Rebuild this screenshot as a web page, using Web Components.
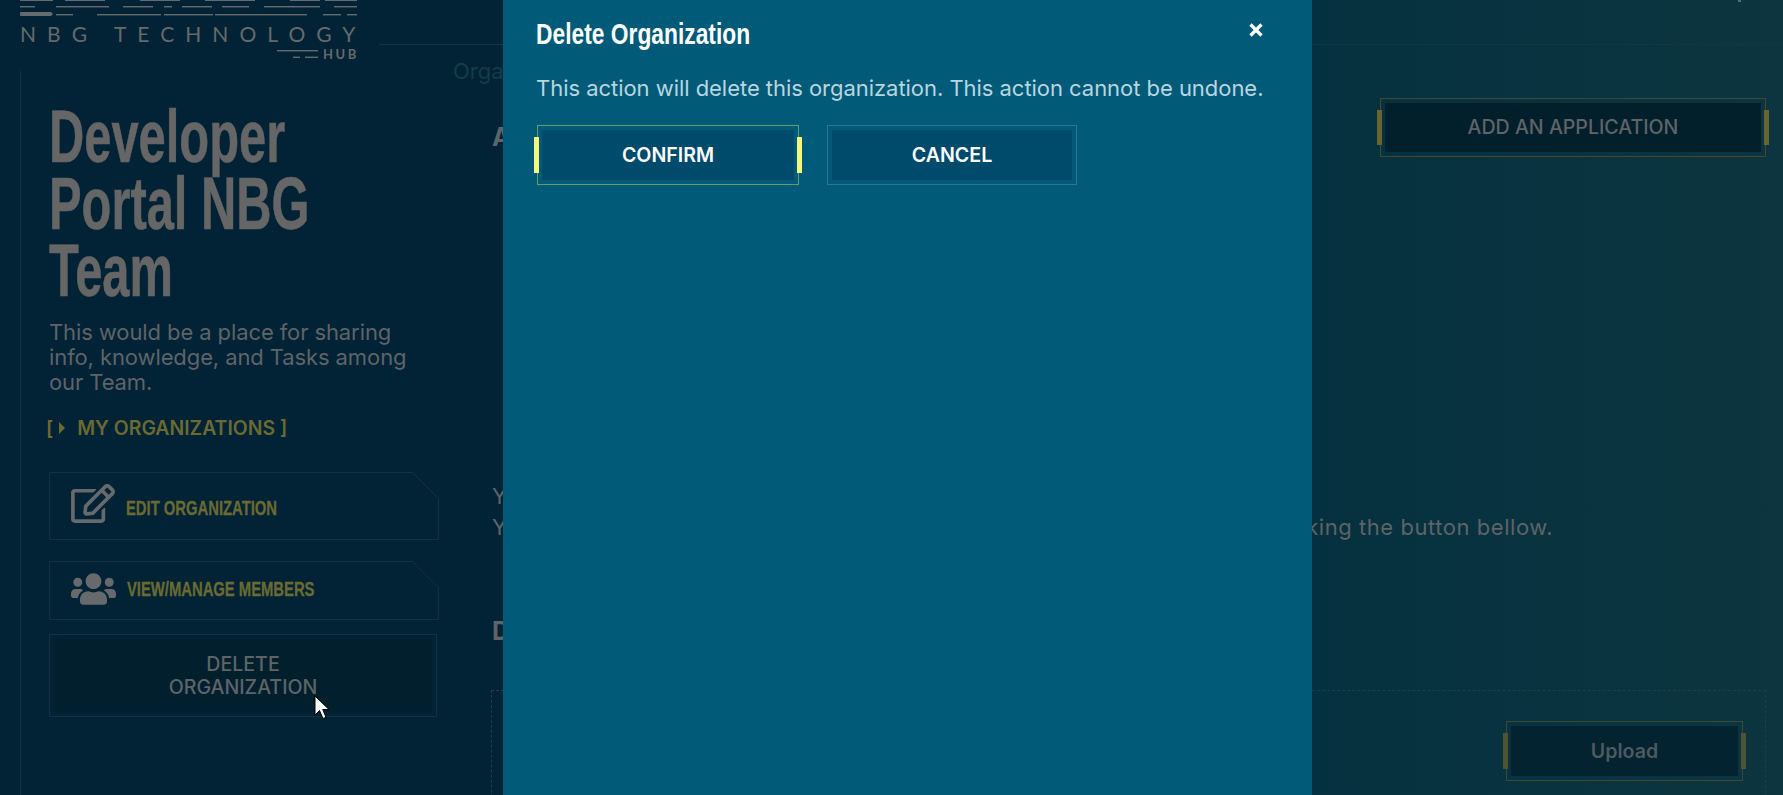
<!DOCTYPE html>
<html>
<head>
<meta charset="utf-8">
<title>Developer Portal</title>
<style>
    html, body { margin: 0; height: 100%; overflow: hidden; background: #012335; }
    body { font-family: "Inter", "Liberation Sans", sans-serif; }
</style>
</head>
<body>
<app-shell>
    <hub-logo slot="logo"></hub-logo>
    <side-panel slot="side" heading="Developer|Portal NBG|Team">
        This would be a place for sharing info, knowledge, and Tasks among our Team.
    </side-panel>
    <main-content slot="main"></main-content>
</app-shell>
<confirm-modal heading="Delete Organization">This action will delete this organization. This action cannot be undone.</confirm-modal>
<mouse-pointer></mouse-pointer>

<script>
// no condensed family is installed, so headings are squeezed sideways
const HEAD_FONT = '"Liberation Sans", sans-serif'
const SQUEEZE = 'display: block; width: max-content; white-space: nowrap; transform-origin: 0 50%;'

class AppShell extends HTMLElement {
    constructor() {
        super()
        this.attachShadow({ mode: 'open' })
        this.shadowRoot.innerHTML = `
            <style>
                :host {
                    display: grid;
                    grid-template-columns: 379px 1fr;
                    height: 795px;
                    overflow: hidden;
                    background: linear-gradient(90deg, #012335 0, #012335 28%, #05303f 72%, #0c353f 100%);
                }
                .topbar {
                    height: 45px;
                    box-sizing: border-box;
                    border-bottom: 1px solid #123743;
                    position: relative;
                }
                .caret {
                    position: absolute;
                    top: 0;
                    right: 42px;
                    width: 3px;
                    height: 2px;
                    background: #5f6a6e;
                }
            </style>
            <div><slot name="logo"></slot><slot name="side"></slot></div>
            <div>
                <div class="topbar"><span class="caret"></span></div>
                <slot name="main"></slot>
            </div>
        `
    }
}

class HubLogo extends HTMLElement {
    constructor() {
        super()
        this.attachShadow({ mode: 'open' })
        this.shadowRoot.innerHTML = `
            <style>
                :host {
                    display: block;
                    height: 71px;
                    padding-left: 20px;
                    color: #666a6c;
                    font-family: "Lato", "Liberation Sans", sans-serif;
                    overflow: hidden;
                }
                svg { display: block; }
                .name {
                    width: 340px;
                    font-size: 21px;
                    line-height: 20px;
                    letter-spacing: 11.05px;
                    white-space: nowrap;
                }
                .sub {
                    display: flex;
                    justify-content: flex-end;
                    align-items: center;
                    gap: 5px;
                    width: 337px;
                    margin-top: 4px;
                    font-size: 13px;
                    line-height: 13px;
                    font-weight: 700;
                    letter-spacing: 2.6px;
                }
                .sub span { margin-right: -2px; }
            </style>
            <svg width="338" height="24" viewBox="0 0 338 24" fill="#666a6c">
                <rect x="0" y="0" width="33" height="1"/><rect x="45" y="0" width="40" height="1"/><rect x="120" y="0" width="40" height="1"/><rect x="185" y="0" width="50" height="1"/><rect x="270" y="0" width="30" height="1"/><rect x="305" y="0" width="32" height="1"/>
                <rect x="0" y="6" width="15" height="1.4"/><rect x="36" y="6" width="53" height="1.4"/><rect x="103" y="6" width="30" height="1.4"/><rect x="144" y="6" width="8" height="1.4"/><rect x="162" y="6" width="30" height="1.4"/><rect x="202" y="6" width="27" height="1.4"/><rect x="244" y="6" width="56" height="1.4"/><rect x="314" y="6" width="23" height="1.4"/>
                <path d="M0 13.5a1 1 0 0 1 1-1.5h30l2 2-2 2H1a1 1 0 0 1-1-1.5z"/>
                <rect x="36" y="14" width="17" height="1.4"/><rect x="77" y="14" width="64" height="1.4"/><rect x="144" y="14" width="49" height="1.4"/><rect x="195" y="14" width="92" height="1.4"/><rect x="303" y="14" width="18" height="1.4"/><rect x="327" y="14" width="10" height="1.4"/>
            </svg>
            <div class="name">NBG TECHNOLOGY</div>
            <div class="sub">
                <svg width="41" height="9" viewBox="0 0 41 9" fill="#666a6c"><rect x="0" y="0" width="41" height="1.4"/><rect x="16" y="6.6" width="7" height="1.4"/><rect x="28" y="6.6" width="13" height="1.4"/></svg>
                <span>HUB</span>
            </div>
        `
    }
}

class SidePanel extends HTMLElement {
    constructor() {
        super()
        this.attachShadow({ mode: 'open' })
        this.shadowRoot.innerHTML = `
            <style>
                :host {
                    display: block;
                    margin-left: 20px;
                    height: 724px;
                    box-sizing: border-box;
                    border-left: 1px solid #14313f;
                    padding: 32px 0 0 28px;
                }
                h1 {
                    margin: 0;
                    font-family: ${HEAD_FONT};
                    font-weight: 700;
                    font-size: 74px;
                    line-height: 67px;
                    color: #666;
                    -webkit-text-stroke: .6px #666;
                }
                h1 span { ${SQUEEZE} transform: scaleX(.66); }
                p {
                    margin: 16px 0 0;
                    width: 365px;
                    font-size: 22px;
                    letter-spacing: -.1px;
                    line-height: 25px;
                    color: #5e6468;
                }
                .orgs {
                    margin: 21px 0 0 -3px;
                    font-size: 19.4px;
                    font-weight: 600;
                    line-height: 24px;
                    color: #6b6a32;
                    display: flex;
                    align-items: center;
                    gap: 5px;
                    white-space: nowrap;
                }
                .tri {
                    width: 0;
                    height: 0;
                    border-left: 6px solid #6b6a32;
                    border-top: 6px solid transparent;
                    border-bottom: 6px solid transparent;
                    margin: 0 7px 0 1px;
                }
                .links { margin-top: 32px; display: flex; flex-direction: column; }
                svg { fill: #666a6c; }
            </style>
            <h1></h1>
            <p><slot></slot></p>
            <div class="orgs">[<span class="tri"></span>MY ORGANIZATIONS ]</div>
            <div class="links">
                <side-link h="68" label="EDIT ORGANIZATION" style="--icon-nudge:-6px;--label-nudge:4px">
                    <svg width="44" height="39" viewBox="0 0 576 512"><path d="M402.3 344.9l32-32c5-5 13.7-1.5 13.7 5.7V464c0 26.5-21.5 48-48 48H48c-26.5 0-48-21.5-48-48V112c0-26.5 21.5-48 48-48h273.5c7.1 0 10.7 8.6 5.7 13.7l-32 32c-1.5 1.5-3.5 2.3-5.7 2.3H48v352h352V350.5c0-2.1.8-4.1 2.3-5.6zm156.6-201.8L296.3 405.7l-90.4 10c-26.2 2.9-48.5-19.2-45.6-45.6l10-90.4L432.9 17.1c22.9-22.9 59.9-22.9 82.7 0l43.2 43.2c22.9 22.9 22.9 60 .1 82.8zM460.1 174L402 115.9 216.2 301.8l-7.3 65.3 65.3-7.3L460.1 174zm64.8-79.7l-43.2-43.2c-4.1-4.1-10.8-4.1-14.8 0L436 82l58.1 58.1 30.9-30.9c4-4.2 4-10.8-.1-14.9z"/></svg>
                </side-link>
                <side-link h="59" label="VIEW/MANAGE MEMBERS" style="margin-top:21px;--icon-nudge:-4px;--label-nudge:-2px">
                    <svg width="45" height="36" viewBox="0 0 640 512"><path d="M96 224c35.3 0 64-28.7 64-64s-28.7-64-64-64-64 28.7-64 64 28.7 64 64 64zm448 0c35.3 0 64-28.7 64-64s-28.7-64-64-64-64 28.7-64 64 28.7 64 64 64zm32 32h-64c-17.6 0-33.5 7.1-45.1 18.6 40.3 22.1 68.9 62 75.1 109.4h66c17.7 0 32-14.3 32-32v-32c0-35.3-28.7-64-64-64zm-256 0c61.9 0 112-50.1 112-112S381.9 32 320 32 208 82.1 208 144s50.1 112 112 112zm76.8 32h-8.3c-20.8 10-43.9 16-68.5 16s-47.6-6-68.5-16h-8.3C179.6 288 128 339.6 128 403.2V432c0 26.5 21.5 48 48 48h288c26.5 0 48-21.5 48-48v-28.8c0-63.6-51.6-115.2-115.2-115.2zm-223.7-13.4C161.5 263.1 145.6 256 128 256H64c-35.3 0-64 28.7-64 64v32c0 17.7 14.3 32 32 32h65.9c6.3-47.4 34.9-87.3 75.2-109.4z"/></svg>
                </side-link>
                <hub-button w="388" h="83" look="plain" style="margin-top:14px">DELETE<br>ORGANIZATION</hub-button>
            </div>
        `
        const h1 = this.shadowRoot.querySelector('h1')
        this.getAttribute('heading').split('|').forEach(line => {
            const span = document.createElement('span')
            span.textContent = line
            h1.appendChild(span)
        })
    }
}

class SideLink extends HTMLElement {
    constructor() {
        super()
        this.attachShadow({ mode: 'open' })
        this.shadowRoot.innerHTML = `
            <style>
                :host {
                    display: block;
                    width: 390px;
                }
                svg.frame { position: absolute; left: 0; top: 0; }
                .link {
                    position: relative;
                    display: flex;
                    align-items: center;
                    gap: 11px;
                    padding-left: 22px;
                    box-sizing: border-box;
                    font-family: ${HEAD_FONT};
                    font-weight: 700;
                    font-size: 20px;
                    color: #6b6a32;
                    white-space: nowrap;
                }
                ::slotted(svg) { display: block; position: relative; margin-top: var(--icon-nudge, 0); }
                .label { ${SQUEEZE} position: relative; transform: scaleX(.74); margin-top: var(--label-nudge, 0); -webkit-text-stroke: .3px #6b6a32; }
            </style>
            <div class="link">
                <svg class="frame"><path fill="none" stroke="#14313f"/></svg>
                <slot></slot>
                <span class="label"></span>
            </div>
        `
        const h = Number(this.getAttribute('h'))
        const link = this.shadowRoot.querySelector('.link')
        link.style.height = h + 'px'
        const frame = this.shadowRoot.querySelector('.frame')
        frame.setAttribute('width', 390)
        frame.setAttribute('height', h)
        frame.querySelector('path').setAttribute('d', `M.5 .5H363.5L389.5 26.5V${h - .5}H.5Z`)
        this.shadowRoot.querySelector('.label').textContent = this.getAttribute('label')
    }
}

class HubButton extends HTMLElement {
    constructor() {
        super()
        this.attachShadow({ mode: 'open' })
        this.shadowRoot.innerHTML = `
            <style>
                :host {
                    display: block;
                    position: relative;
                    box-sizing: border-box;
                    border: 1px solid var(--edge);
                    padding: 4px;
                    flex: none;
                }
                :host([look="plain"]) { --edge: #14313f; --fill: #011f2d; --ink: #5e6468; --bar: none; --weight: 500; }
                :host([look="dim"]) { --edge: #43492f; --fill: #021f2c; --ink: #5e6468; --bar: block; --barcolor: #68652f; --weight: 500; }
                :host([look="upload"]) { --edge: #3c4a33; --fill: #02232f; --ink: #4d5a60; --bar: block; --barcolor: #4f5332; --weight: 600; }
                :host([look="confirm"]) { --edge: #6b9a6a; --fill: #004a6c; --ink: #fff; --bar: block; --barcolor: #f8f67a; --weight: 600; }
                :host([look="cancel"]) { --edge: #2d7590; --fill: #004a6c; --ink: #fff; --bar: none; --weight: 600; }
                .face {
                    height: 100%;
                    background: var(--fill);
                    color: var(--ink);
                    font-size: 19.6px;
                    line-height: 23px;
                    font-weight: var(--weight);
                    display: flex;
                    align-items: center;
                    justify-content: center;
                    text-align: center;
                }
                .bar {
                    display: var(--bar);
                    position: absolute;
                    top: 11px;
                    bottom: 11px;
                    width: 5px;
                    background: var(--barcolor);
                }
                .bar.l { left: -4px; }
                .bar.r { right: -4px; }
            </style>
            <span class="bar l"></span>
            <div class="face"><span><slot></slot></span></div>
            <span class="bar r"></span>
        `
        this.style.width = this.getAttribute('w') + 'px'
        this.style.height = this.getAttribute('h') + 'px'
    }
}

class MainContent extends HTMLElement {
    constructor() {
        super()
        this.attachShadow({ mode: 'open' })
        this.shadowRoot.innerHTML = `
            <style>
                :host {
                    display: block;
                    padding: 15px 17px 0 74px;
                    font-size: 22px;
                    color: #5e6468;
                }
                .crumb { line-height: 22px; color: #123e48; }
                .section { margin-left: 39px; }
                .top {
                    display: flex;
                    justify-content: space-between;
                    margin-top: 16px;
                }
                h2 {
                    margin: 0;
                    font-size: 25px;
                    font-weight: 700;
                    line-height: 28px;
                    color: #5e6468;
                }
                .top h2 { margin-top: 25px; }
                .copy { margin: 324px 0 0; line-height: 31px; white-space: nowrap; letter-spacing: .55px; }
                .docs { margin-top: 74px; }
                .drop {
                    margin-top: 45px;
                    margin-left: -1px;
                    height: 200px;
                    border: 1px dashed #1d3f49;
                    padding: 30px 22px 0 0;
                    display: flex;
                    justify-content: flex-end;
                }
            </style>
            <div class="crumb">Organizations</div>
            <div class="section">
                <div class="top">
                    <h2>Applications</h2>
                    <hub-button w="386" h="59" look="dim">ADD AN APPLICATION</hub-button>
                </div>
                <div class="copy">You have no applications yet.<br>You can add another application to this organization at any moment by clicking the button bellow.</div>
                <h2 class="docs">Documents</h2>
                <div class="drop"><hub-button w="237" h="60" look="upload">Upload</hub-button></div>
            </div>
        `
    }
}

class ConfirmModal extends HTMLElement {
    constructor() {
        super()
        this.attachShadow({ mode: 'open' })
        this.shadowRoot.innerHTML = `
            <style>
                :host {
                    position: absolute;
                    left: 503px;
                    top: 0;
                    width: 809px;
                    height: 795px;
                    box-sizing: border-box;
                    padding: 14px 33px;
                    background: #005a78;
                }
                h3 {
                    margin: 0;
                    font-family: ${HEAD_FONT};
                    font-size: 30px;
                    line-height: 40px;
                    font-weight: 700;
                    color: #fff;
                }
                h3 span { ${SQUEEZE} transform: scaleX(.76); }
                p {
                    margin: 20px 0 0;
                    font-size: 22px;
                    line-height: 28px;
                    letter-spacing: -.04px;
                    color: #b8d6e0;
                    white-space: nowrap;
                }
                .actions { display: flex; gap: 28px; margin-top: 23px; padding-left: 1px; }
                .close {
                    position: absolute;
                    left: 746px;
                    top: 23px;
                    width: 14px;
                    height: 14px;
                }
            </style>
            <h3><span></span></h3>
            <p><slot></slot></p>
            <div class="actions">
                <hub-button w="262" h="60" look="confirm">CONFIRM</hub-button>
                <hub-button w="250" h="60" look="cancel">CANCEL</hub-button>
            </div>
            <svg class="close" viewBox="0 0 14 14"><path d="M1.5 1.5l11 11M12.5 1.5l-11 11" stroke="#fff" stroke-width="3.2"/></svg>
        `
        this.shadowRoot.querySelector('h3 span').textContent = this.getAttribute('heading')
    }
}

class MousePointer extends HTMLElement {
    constructor() {
        super()
        this.attachShadow({ mode: 'open' })
        this.shadowRoot.innerHTML = `
            <style>
                :host { position: absolute; left: 314px; top: 695px; width: 18px; height: 26px; }
            </style>
            <svg width="18" height="26" viewBox="0 0 18 26"><path d="M1 1V20L5.5 15.5 9 23.5 12 22.3 8.7 14.5H15Z" fill="#fff" stroke="#000" stroke-width="1"/></svg>
        `
    }
}

customElements.define('side-link', SideLink)
customElements.define('hub-button', HubButton)
customElements.define('hub-logo', HubLogo)
customElements.define('side-panel', SidePanel)
customElements.define('main-content', MainContent)
customElements.define('confirm-modal', ConfirmModal)
customElements.define('mouse-pointer', MousePointer)
customElements.define('app-shell', AppShell)
</script>
</body>
</html>
